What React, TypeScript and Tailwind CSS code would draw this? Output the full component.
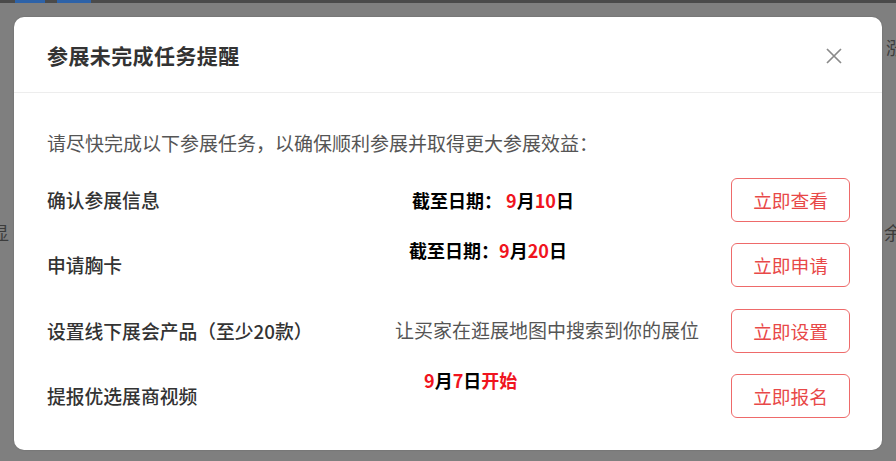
const FONT = '"Noto Sans CJK SC", "Noto Sans", sans-serif';

type Task = {
  label: string;
  action: string;
  middle: React.ReactNode;
};

function Red({ children }: { children: React.ReactNode }) {
  return <span className="text-[#f0141e]">{children}</span>;
}

const tasks: Task[] = [
  {
    label: '确认参展信息',
    action: '立即查看',
    middle: (
      <span className="ml-[17px] text-[18px] font-bold text-black">
        截至日期：&nbsp;<Red>9</Red>月<Red>10</Red>日
      </span>
    ),
  },
  {
    label: '申请胸卡',
    action: '立即申请',
    middle: (
      <span className="mb-[30px] ml-[14px] text-[18px] font-bold text-black">
        截至日期：<Red>9</Red>月<Red>20</Red>日
      </span>
    ),
  },
  {
    label: '设置线下展会产品（至少20款）',
    action: '立即设置',
    middle: <span className="text-[19px] text-[#555]">让买家在逛展地图中搜索到你的展位</span>,
  },
  {
    label: '提报优选展商视频',
    action: '立即报名',
    middle: (
      <span className="mb-[30px] ml-[29px] text-[18px] font-bold text-black">
        <Red>9</Red>月<Red>7</Red>日<Red>开始</Red>
      </span>
    ),
  },
];

function CloseIcon() {
  return (
    <svg width="18" height="18" viewBox="0 0 18 18" fill="none" stroke="#8a8a8a" strokeWidth="1.7">
      <path d="M2 2L16 16M16 2L2 16" />
    </svg>
  );
}

export default function App() {
  return (
    <div className="relative h-[461px] w-[896px] overflow-hidden bg-[#7f7f7f]" style={{ fontFamily: FONT }}>
      {/* dimmed page behind the overlay */}
      <div className="flex h-[3px] bg-[#4a4a4a]">
        <div className="ml-[15px] w-[30px] bg-[#2d62a8]" />
        <div className="ml-[12px] w-[34px] bg-[#2d62a8]" />
      </div>
      <span className="absolute left-[886px] top-[34px] text-[18px] text-[#3c3c3c]">涨</span>
      <span className="absolute left-[884px] top-[219px] text-[18px] text-[#3c3c3c]">余</span>
      <span className="absolute left-[-9px] top-[219px] text-[18px] text-[#3c3c3c]">显</span>

      {/* modal */}
      <div className="absolute left-[14px] top-[17px] flex h-[433px] w-[868px] flex-col rounded-[10px] bg-white shadow-[0_0_2px_rgba(0,0,0,0.2)]">
        <div className="flex h-[76px] items-center justify-between border-b border-[#ededed] pl-[33px] pr-[39px] pt-[2px]">
          <h2 className="text-[21px] font-semibold tracking-[0.4px] text-[#333]">参展未完成任务提醒</h2>
          <button type="button" className="flex h-[18px] w-[18px] items-center justify-center">
            <CloseIcon />
          </button>
        </div>

        <div className="flex flex-col pl-[33px] pr-[32px] pt-[37px]">
          <p className="mb-[22px] text-[19px] leading-[26px] text-[#555]">
            请尽快完成以下参展任务，以确保顺利参展并取得更大参展效益：
          </p>

          <div className="flex flex-col gap-[21.3px]">
            {tasks.map((task) => (
              <div key={task.label} className="flex h-[44px] items-center">
                <div className="w-[348px] text-[18.8px] font-medium text-[#333]">{task.label}</div>
                <div className="flex flex-1 items-center">{task.middle}</div>
                <button
                  type="button"
                  className="h-[44px] w-[119px] rounded-[6px] border border-[#ee6a6a] text-[18.7px] text-[#e84848]"
                >
                  {task.action}
                </button>
              </div>
            ))}
          </div>
        </div>
      </div>
    </div>
  );
}
